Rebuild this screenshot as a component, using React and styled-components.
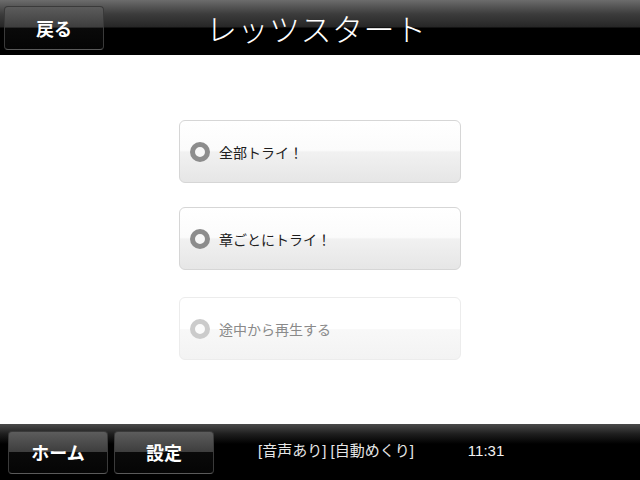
import React, { useState } from "react";
import styled, { createGlobalStyle } from "styled-components";

const GlobalStyle = createGlobalStyle`
  html, body {
    margin: 0;
    padding: 0;
    background: #ffffff;
  }
  body {
    font-family: "Noto Sans CJK JP", "Liberation Sans", sans-serif;
  }
`;

const Screen = styled.div`
  width: 640px;
  height: 480px;
  display: flex;
  flex-direction: column;
  overflow: hidden;
`;

const Header = styled.header`
  height: 55px;
  flex: none;
  display: flex;
  align-items: center;
  padding: 0 4px;
  box-sizing: border-box;
  background: linear-gradient(
    to bottom,
    #6c6c6c 0px,
    #3c3c3c 14px,
    #262626 27px,
    #000000 28px,
    #000000 100%
  );
`;

const BarButton = styled.button`
  width: ${(p) => p.$width || 100}px;
  height: ${(p) => p.$height || 44}px;
  border: 1px solid #3a3a3a;
  border-bottom-color: #5a5a5a;
  border-radius: 4px;
  background: linear-gradient(
    to bottom,
    #5c5c5c 0%,
    #3e3e3e 48%,
    #0a0a0a 50%,
    #050505 100%
  );
  color: #ffffff;
  font-family: "Noto Sans CJK JP", sans-serif;
  font-size: ${(p) => p.$size || 18}px;
  font-weight: ${(p) => p.$weight || 400};
  padding: 0;
  cursor: pointer;
`;

const Title = styled.h1`
  margin: 0 0 0 102px;
  font-size: 31px;
  font-weight: 300;
  color: #ffffff;
  letter-spacing: 0.5px;
  line-height: 1;
`;

const Content = styled.main`
  flex: 1;
  display: flex;
  flex-direction: column;
  align-items: center;
  padding-top: 65px;
  box-sizing: border-box;
`;

const Option = styled.button`
  width: 282px;
  height: 63px;
  flex: none;
  margin-top: ${(p) => p.$gap || 0}px;
  display: flex;
  align-items: center;
  gap: 9px;
  padding: 0 0 0 10px;
  box-sizing: border-box;
  border: 1px solid ${(p) => (p.$disabled ? "#ececec" : "#d6d6d6")};
  border-radius: 6px;
  background: ${(p) =>
    p.$disabled
      ? "linear-gradient(to bottom, #ffffff 0%, #ffffff 50%, #f8f8f8 52%, #f3f3f3 100%)"
      : "linear-gradient(to bottom, #ffffff 0%, #fbfbfb 48%, #f1f1f1 51%, #e6e6e6 100%)"};
  color: ${(p) => (p.$disabled ? "#8a8a8a" : "#1e1e1e")};
  font-family: "Noto Sans CJK JP", sans-serif;
  font-size: 14px;
  cursor: pointer;
  text-align: left;
`;

const Radio = styled.span`
  width: 20px;
  height: 20px;
  box-sizing: border-box;
  border-radius: 50%;
  border: 5px solid ${(p) => (p.$disabled ? "#cbcbcb" : "#8c8c8c")};
  background: ${(p) => (p.$disabled ? "#fbfbfb" : "#f6f6f6")};
  flex: none;
`;

const Footer = styled.footer`
  height: 56px;
  flex: none;
  display: flex;
  align-items: center;
  padding: 0 0 0 8px;
  gap: 6px;
  box-sizing: border-box;
  background: linear-gradient(
    to bottom,
    #4a4a4a 0px,
    #1e1e1e 10px,
    #000000 20px,
    #000000 100%
  );
`;

const Status = styled.span`
  margin-left: 38px;
  color: #e6e6e6;
  font-size: 15px;
  font-family: "Liberation Sans", "Noto Sans CJK JP", sans-serif;
  margin-top: -6px;
`;

const Clock = styled.span`
  margin-left: 48px;
  color: #f2f2f2;
  font-size: 15px;
  font-family: "Liberation Sans", sans-serif;
  margin-top: -4px;
`;

const options = [
  { id: "all", label: "全部トライ！", gap: 0 },
  { id: "chapter", label: "章ごとにトライ！", gap: 24 },
  { id: "resume", label: "途中から再生する", gap: 27, disabled: true },
];

export default function App() {
  const [selected, setSelected] = useState(null);

  return (
    <>
      <GlobalStyle />
      <Screen>
        <Header>
          <BarButton $width={100} $height={44} $size={18} $weight={700}>
            戻る
          </BarButton>
          <Title>レッツスタート</Title>
        </Header>

        <Content>
          {options.map((o) => (
            <Option
              key={o.id}
              $gap={o.gap}
              $disabled={o.disabled}
              onClick={() => !o.disabled && setSelected(o.id)}
            >
              <Radio $disabled={o.disabled} />
              {o.label}
            </Option>
          ))}
        </Content>

        <Footer>
          <BarButton $width={100} $height={43} $size={18} $weight={700}>
            ホーム
          </BarButton>
          <BarButton $width={100} $height={43} $size={18} $weight={700}>
            設定
          </BarButton>
          <Status>[音声あり] [自動めくり]</Status>
          <Clock>11:31</Clock>
        </Footer>
      </Screen>
    </>
  );
}
